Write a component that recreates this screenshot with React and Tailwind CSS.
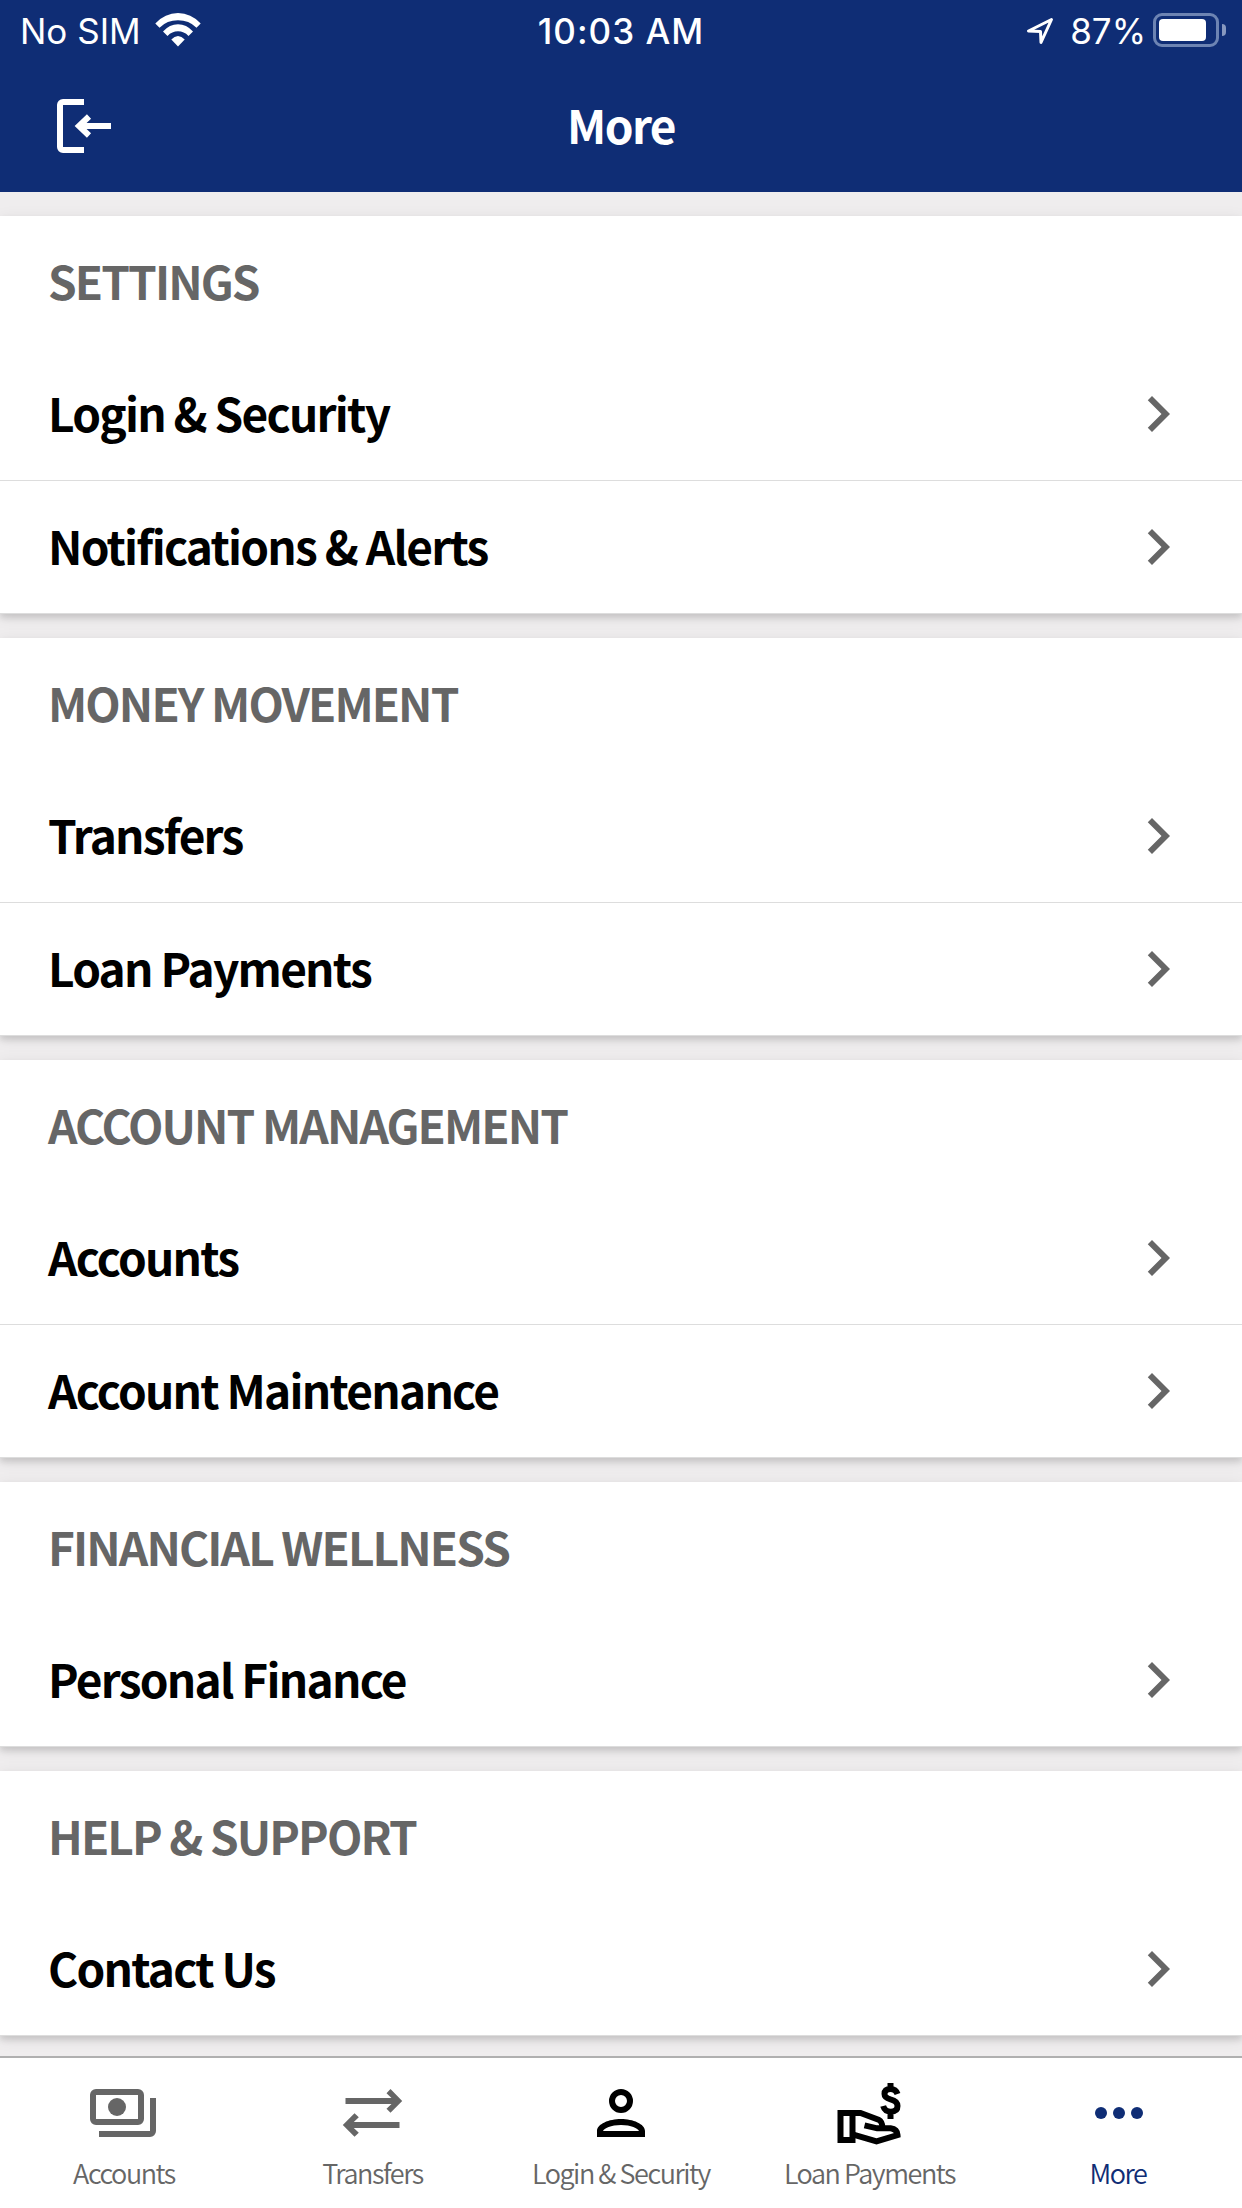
import React from 'react';

const sections = [
  { title: 'SETTINGS', items: ['Login & Security', 'Notifications & Alerts'] },
  { title: 'MONEY MOVEMENT', items: ['Transfers', 'Loan Payments'] },
  { title: 'ACCOUNT MANAGEMENT', items: ['Accounts', 'Account Maintenance'] },
  { title: 'FINANCIAL WELLNESS', items: ['Personal Finance'] },
  { title: 'HELP & SUPPORT', items: ['Contact Us'] },
];

const AccountsIcon = () => (
  <svg className="w-[72px] h-[72px]" viewBox="0 0 72 72" fill="none" stroke="#666" strokeWidth="6">
    <rect x="5" y="15" width="48" height="30" rx="3" />
    <circle cx="29" cy="30" r="9" fill="#666" stroke="none" />
    <path d="M11 57H62a3 3 0 0 0 3-3V21" />
  </svg>
);

const TransfersIcon = () => (
  <svg className="w-[72px] h-[72px]" viewBox="0 0 72 72" fill="#666">
    <path d="M53.5 12L65.2 24 53.5 35.7 49.5 31.7 54.5 27H8.5V21H54.5L49.5 16.3z" />
    <path d="M17.5 36.3L5.8 48 17.5 59.7 21.8 55.7 16.8 51H62.5V45H16.8L21.8 40.3z" />
  </svg>
);

const PersonIcon = () => (
  <svg className="w-[72px] h-[72px]" viewBox="0 0 72 72" fill="#000" fillRule="evenodd">
    <path d="M36 12a12 12 0 1 0 0 24 12 12 0 0 0 0-24zM36 18a6 6 0 1 1 0 12 6 6 0 0 1 0-12z" />
    <path d="M36 42c-12 0-24 5-24 12v6h48v-6c0-7-12-12-24-12zM18 54c1-2.500 8-6 18-6s17 3.500 18 6z" />
  </svg>
);

const HandIcon = () => (
  <svg className="w-[72px] h-[72px]" viewBox="160.5 171 216 216" fill="none" stroke="#000" strokeWidth="18">
    <path d="M180 279H216V360H180z" />
    <path d="M216 279H240L294 299Q306 305 306 325" />
    <path d="M252 316L290 325H330Q350 328 351 345L288 364 216 343" />
    <path d="M351 222Q346 207 330 207 312 207 312 222 312 233 330 238 351 243 351 258 351 275 331 275 313 275 308 258M330 189V207M330 275V297" />
  </svg>
);

const MoreIcon = () => (
  <svg className="w-[72px] h-[72px]" viewBox="0 0 72 72" fill="#0f2d75">
    <circle cx="19" cy="36" r="6" />
    <circle cx="37" cy="36" r="6" />
    <circle cx="55" cy="36" r="6" />
  </svg>
);

const tabs = [
  { label: 'Accounts', icon: <AccountsIcon /> },
  { label: 'Transfers', icon: <TransfersIcon /> },
  { label: 'Login & Security', icon: <PersonIcon /> },
  { label: 'Loan Payments', icon: <HandIcon /> },
  { label: 'More', icon: <MoreIcon />, active: true },
];

const StatusBar = () => (
  <div className="h-[60px] grid grid-cols-3 items-center font-['Inter',sans-serif] text-[35px] leading-none">
    <div className="flex items-center pl-5">
      <span className="w-[135px] pt-0.5">No SIM</span>
      <svg className="w-[46px] h-[34px]" viewBox="0 0 46 34" fill="#fff">
        <path d="M0.300 10.500Q10 0 23 0T45.700 10.500L41.500 14.700Q34 7.300 23 7.300T4.500 14.700z" />
        <path d="M8 18.500Q14.500 11.200 23 11.200T38 18.500L33.500 22.900Q29 18.300 23 18.300T12.500 22.900z" />
        <path d="M16.300 26.500Q19.500 23 23 23T29.700 26.500L23 33.500z" />
      </svg>
    </div>
    <div className="pt-0.5 text-center font-medium tracking-[1px]">10:03 AM</div>
    <div className="flex items-center justify-end pr-4">
      <svg className="w-7 h-7 mt-0.5 mr-[16px]" viewBox="0 0 28 28" fill="none" stroke="#fff" strokeWidth="3" strokeLinejoin="round">
        <path d="M25.500 2.500L2.500 14 14.500 14.500 15 25.500z" />
      </svg>
      <span className="pt-0.5">87%</span>
      <div className="ml-[7px] w-[66px] h-[34px] rounded-[9px] border-[3px] border-[#6d84b3] p-[3px]">
        <div className="w-[47px] h-[22px] rounded-[4px] bg-white"></div>
      </div>
      <div className="ml-[3px] w-1 h-3 rounded-r-full bg-[#8798bf]"></div>
    </div>
  </div>
);

const Chevron = () => (
  <svg className="w-[72px] h-[72px]" viewBox="0 0 24 24" fill="#666">
    <path d="M8.590 16.590L13.170 12 8.590 7.410 10 6l6 6-6 6z" />
  </svg>
);

const App = () => {
  return (
    <div className="w-[1242px] h-[2208px] flex flex-col overflow-hidden bg-[#efedee] font-['Noto_Sans_CJK_SC',sans-serif]">
      <header className="h-[192px] shrink-0 bg-[#0f2d75] text-white">
        <StatusBar />
        <div className="h-[132px] grid grid-cols-3 items-center">
          <svg className="w-[72px] h-[72px] ml-12" viewBox="0 0 72 72" fill="none" stroke="#fff" strokeWidth="6">
            <path d="M36 12H15a3 3 0 0 0-3 3V57a3 3 0 0 0 3 3H36" />
            <path d="M63 36H33M41 26.500L31 36 41 45.500" />
          </svg>
          <h1 className="text-center text-[46px] leading-[60px] font-bold tracking-[-1.600px] pb-1">More</h1>
        </div>
      </header>

      <main className="flex-1 min-h-0 pt-6 flex flex-col gap-6 overflow-hidden">
        {sections.map((section) => (
          <section
            key={section.title}
            className="relative shrink-0 bg-white shadow-[0_4px_6px_0_rgba(0,0,0,0.12),0_3px_15px_0_rgba(0,0,0,0.08)]"
          >
            <h2 className="h-[132px] flex items-center pl-12 pb-[3px] text-[46px] font-bold tracking-[-1.900px] text-[#666]">
              {section.title}
            </h2>
            {section.items.map((item) => (
              <div key={item} className="h-[133px] flex items-center justify-between px-12 border-b border-[#ddd]">
                <span className="pb-[3px] text-[46px] font-bold tracking-[-1.750px] text-black">{item}</span>
                <Chevron />
              </div>
            ))}
          </section>
        ))}
      </main>

      <nav className="relative h-[152px] shrink-0 bg-white border-t-2 border-[#b0b0b0] grid grid-cols-[248px_249px_248px_249px_248px]">
        {tabs.map((tab) => (
          <div key={tab.label} className="flex flex-col items-center pt-[19px]">
            {tab.icon}
            <span
              className={`mt-1 text-[27px] leading-[40px] font-[350] tracking-[-1.450px] whitespace-nowrap ${
                tab.active ? 'text-[#0f2d75]' : 'text-[#666]'
              }`}
            >
              {tab.label}
            </span>
          </div>
        ))}
      </nav>
    </div>
  );
};

export default App;
